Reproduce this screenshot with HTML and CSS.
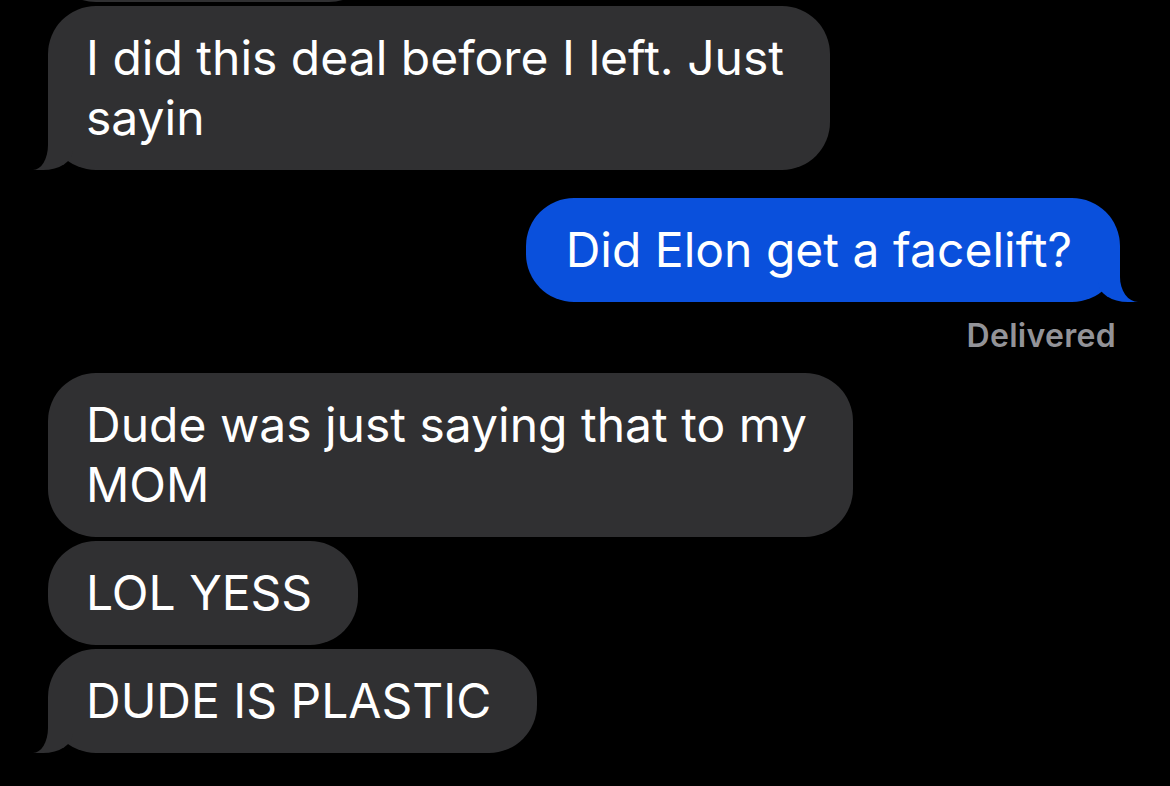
FILE: index.html
```html
<!DOCTYPE html>
<html>
	<head>
		<meta charset="UTF-8">
		<title>Messages</title>
		<link rel="stylesheet" href="styles.css">
	</head>

	<body>
		<div class="thread">
			<!-- previous bubble, cut off by the top edge -->
			<div class="bubble them cut"></div>

			<div class="bubble them tail">I did this deal before I left. Just<br>sayin</div>

			<div class="bubble me tail">Did Elon get a facelift?</div>
			<div class="status">Delivered</div>

			<div class="bubble them">Dude was just saying that to my<br>MOM</div>
			<div class="bubble them">LOL YESS</div>
			<div class="bubble them tail">DUDE IS PLASTIC</div>
		</div>
	</body>
</html>
```

FILE: styles.css
```css
*{
	margin: 0;
	padding: 0;
	box-sizing: border-box;
}
html,body{
	height: 100%;
	background: #000;
}
body{
	font-family: Inter, "Noto Sans", sans-serif;
	overflow: hidden;
}
.thread{
	display: flex;
	flex-direction: column;
	align-items: flex-start;
	padding: 0 50px 0 48px;
}
.bubble{
	position: relative;
	z-index: 0;
	margin-top: 4px;
	padding: 22px 46px 22px 38px;
	border-radius: 48px;
	background: #303032;
	color: #fff;
	font-size: 48px;
	line-height: 60px;
	white-space: nowrap;
}
.bubble.cut{
	width: 329px;
	height: 104px;
	margin-top: -102px;
}
.bubble.me{
	align-self: flex-end;
	margin-top: 28px;
	padding: 22px 48px 22px 40px;
	background: #0a50dc;
}
.status{
	align-self: flex-end;
	margin-top: 16px;
	padding-right: 4px;
	color: #939398;
	font-size: 32px;
	line-height: 36px;
	font-weight: 600;
	letter-spacing: 0.3px;
}
.status + .bubble{
	margin-top: 19px;
}

/* bubble tails */
.tail::before,.tail::after{
	content: "";
	position: absolute;
	bottom: 0;
	z-index: -1;
	height: 50px;
}
.them.tail::before{
	left: -15px;
	width: 40px;
	background: #303032;
	border-bottom-right-radius: 30px 20px;
}
.them.tail::after{
	left: -30px;
	width: 30px;
	background: #000;
	border-bottom-right-radius: 15px 25px;
}
.me.tail::before{
	right: -18px;
	width: 40px;
	background: #0a50dc;
	border-bottom-left-radius: 30px 20px;
}
.me.tail::after{
	right: -33px;
	width: 33px;
	background: #000;
	border-bottom-left-radius: 18px 25px;
}
```
